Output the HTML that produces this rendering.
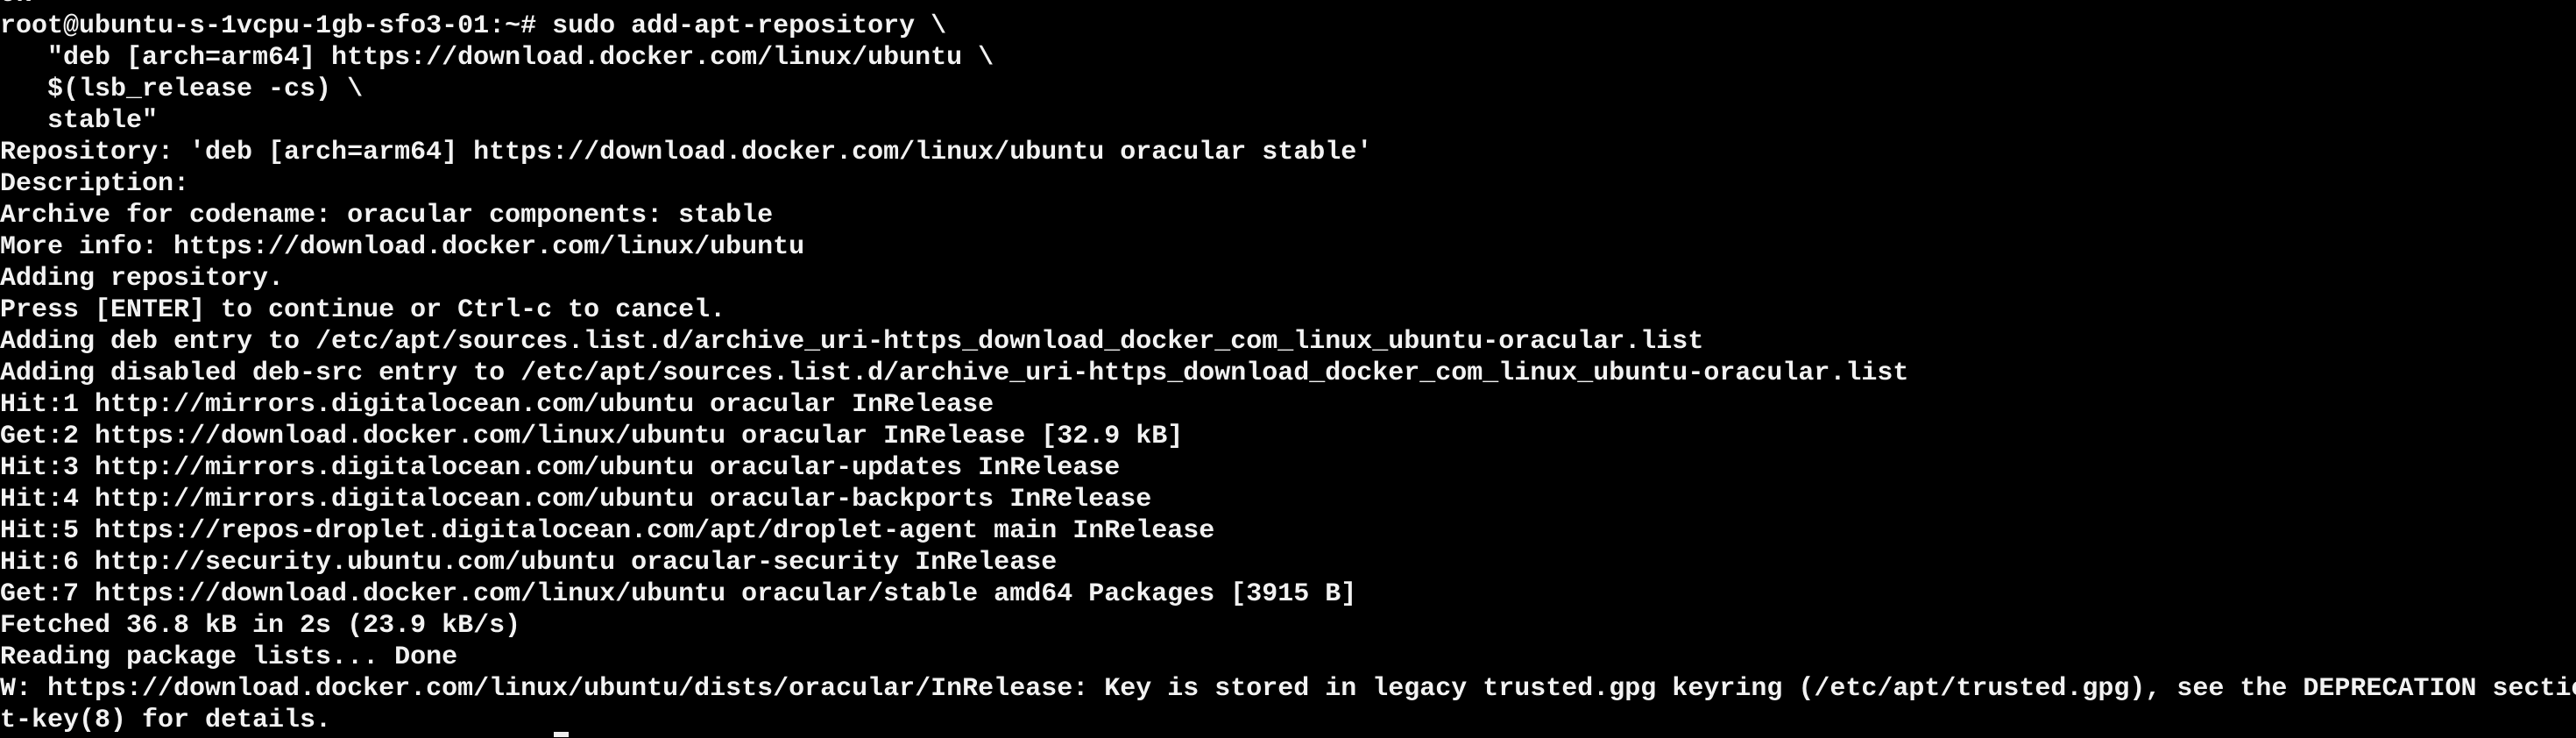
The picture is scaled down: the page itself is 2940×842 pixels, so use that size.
<!DOCTYPE html>
<html><head><meta charset="utf-8"><style>
html,body{margin:0;padding:0;background:#000;width:2940px;height:842px;overflow:hidden;position:relative}
pre{position:absolute;left:0;top:-24px;margin:0;font-family:"Liberation Mono",monospace;font-size:30px;line-height:36px;color:#f2f2f2;font-weight:bold;white-space:pre;}
.cur{position:absolute;left:632px;top:835px;width:17px;height:6px;background:#eee}
</style></head><body>
<pre>ok
root@ubuntu-s-1vcpu-1gb-sfo3-01:~# sudo add-apt-repository \
   "deb [arch=arm64] https://download.docker.com/linux/ubuntu \
   $(lsb_release -cs) \
   stable"
Repository: 'deb [arch=arm64] https://download.docker.com/linux/ubuntu oracular stable'
Description:
Archive for codename: oracular components: stable
More info: https://download.docker.com/linux/ubuntu
Adding repository.
Press [ENTER] to continue or Ctrl-c to cancel.
Adding deb entry to /etc/apt/sources.list.d/archive_uri-https_download_docker_com_linux_ubuntu-oracular.list
Adding disabled deb-src entry to /etc/apt/sources.list.d/archive_uri-https_download_docker_com_linux_ubuntu-oracular.list
Hit:1 http://mirrors.digitalocean.com/ubuntu oracular InRelease
Get:2 https://download.docker.com/linux/ubuntu oracular InRelease [32.9 kB]
Hit:3 http://mirrors.digitalocean.com/ubuntu oracular-updates InRelease
Hit:4 http://mirrors.digitalocean.com/ubuntu oracular-backports InRelease
Hit:5 https://repos-droplet.digitalocean.com/apt/droplet-agent main InRelease
Hit:6 http://security.ubuntu.com/ubuntu oracular-security InRelease
Get:7 https://download.docker.com/linux/ubuntu oracular/stable amd64 Packages [3915 B]
Fetched 36.8 kB in 2s (23.9 kB/s)
Reading package lists... Done
W: https://download.docker.com/linux/ubuntu/dists/oracular/InRelease: Key is stored in legacy trusted.gpg keyring (/etc/apt/trusted.gpg), see the DEPRECATION section in ap
t-key(8) for details.</pre>
<div class="cur"></div>
</body></html>
